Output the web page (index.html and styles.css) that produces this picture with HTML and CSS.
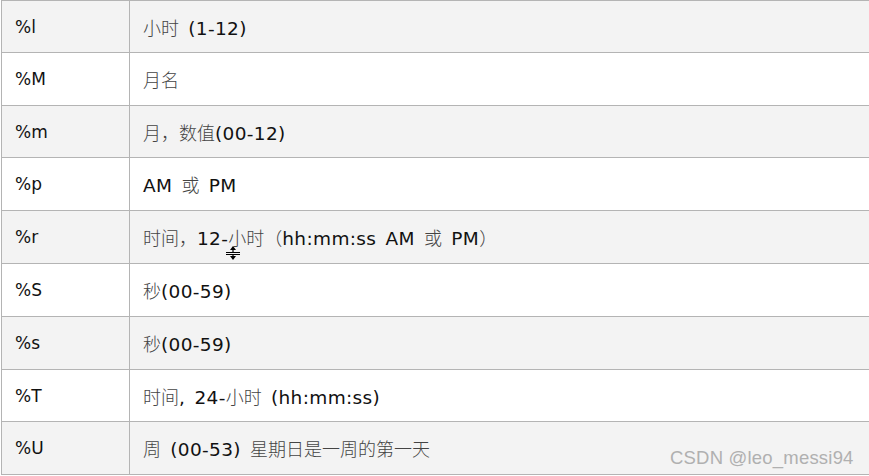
FILE: index.html
```html
<!DOCTYPE html>
<html>
<head>
<meta charset="utf-8">
<link rel="stylesheet" href="styles.css">
</head>
<body>
<div class="page">
  <div class="grid">
    <div class="c k g"><span class="t">%l</span></div><div class="c v g"><span class="t"><span class="cn">小时</span> (1-12)</span></div>
    <div class="c k"><span class="t">%M</span></div><div class="c v"><span class="t"><span class="cn">月名</span></span></div>
    <div class="c k g"><span class="t">%m</span></div><div class="c v g"><span class="t"><span class="cn">月，数值</span>(00-12)</span></div>
    <div class="c k"><span class="t">%p</span></div><div class="c v"><span class="t">AM <span class="cn">或</span> PM</span></div>
    <div class="c k g"><span class="t">%r</span></div><div class="c v g"><span class="t"><span class="cn">时间，</span>12-<span class="cn">小时（</span>hh:mm:ss AM <span class="cn">或</span> PM<span class="cn">）</span></span></div>
    <div class="c k"><span class="t">%S</span></div><div class="c v"><span class="t"><span class="cn">秒</span>(00-59)</span></div>
    <div class="c k g"><span class="t">%s</span></div><div class="c v g"><span class="t"><span class="cn">秒</span>(00-59)</span></div>
    <div class="c k"><span class="t">%T</span></div><div class="c v"><span class="t"><span class="cn">时间</span>, 24-<span class="cn">小时</span> (hh:mm:ss)</span></div>
    <div class="c k g"><span class="t">%U</span></div><div class="c v g"><span class="t"><span class="cn">周</span> (00-53) <span class="cn">星期日是一周的第一天</span></span></div>
  </div>
  <svg class="cursor" width="14" height="16" viewBox="0 0 14 16">
    <path d="M7 1 L4 5 H10 Z" fill="#000"/>
    <rect x="6.4" y="4" width="1.2" height="3" fill="#000"/>
    <rect x="0" y="7" width="14" height="1" fill="#000"/>
    <rect x="0" y="9" width="14" height="1" fill="#000"/>
    <rect x="6.4" y="10" width="1.2" height="3" fill="#000"/>
    <path d="M7 15 L4 11 H10 Z" fill="#000"/>
  </svg>
  <div class="mark">CSDN @leo_messi94</div>
</div>
</body>
</html>
```

FILE: styles.css
```css
html, body {
  margin: 0;
  padding: 0;
  background: #ffffff;
}
.page {
  position: relative;
  width: 869px;
  height: 476px;
  overflow: hidden;
}
.grid {
  display: grid;
  grid-template-columns: 128px 760px;
  grid-template-rows: 52px 53px 52px 53px 53px 53px 53px 52px 53px;
  margin-left: 1px;
  border-top: 1px solid #b4b4b4;
  border-left: 1px solid #b4b4b4;
  width: 888px;
  font-family: "DejaVu Sans", Verdana, sans-serif;
  color: #111;
}
.c {
  display: flex;
  align-items: center;
  border-bottom: 1px solid #b4b4b4;
  border-right: 1px solid #b4b4b4;
  box-sizing: border-box;
  background: #ffffff;
  white-space: pre;
}
.c.g {
  background: #f3f3f3;
}
.k {
  padding-left: 13px;
  font-size: 17px;
}
.v {
  padding-left: 13px;
  font-size: 18.5px;
  letter-spacing: 0.35px;
  word-spacing: 3px;
}
.cn {
  font-family: "Noto Sans CJK SC", sans-serif;
  font-weight: 300;
  font-size: 18px;
  letter-spacing: 0;
  color: #444;
}
.cursor {
  position: absolute;
  left: 226px;
  top: 245px;
}
.mark {
  position: absolute;
  left: 670px;
  top: 447px;
  font-family: "Liberation Sans", Arial, sans-serif;
  font-size: 18.5px;
  color: #b0b0b0;
  letter-spacing: 0.2px;
}
```
